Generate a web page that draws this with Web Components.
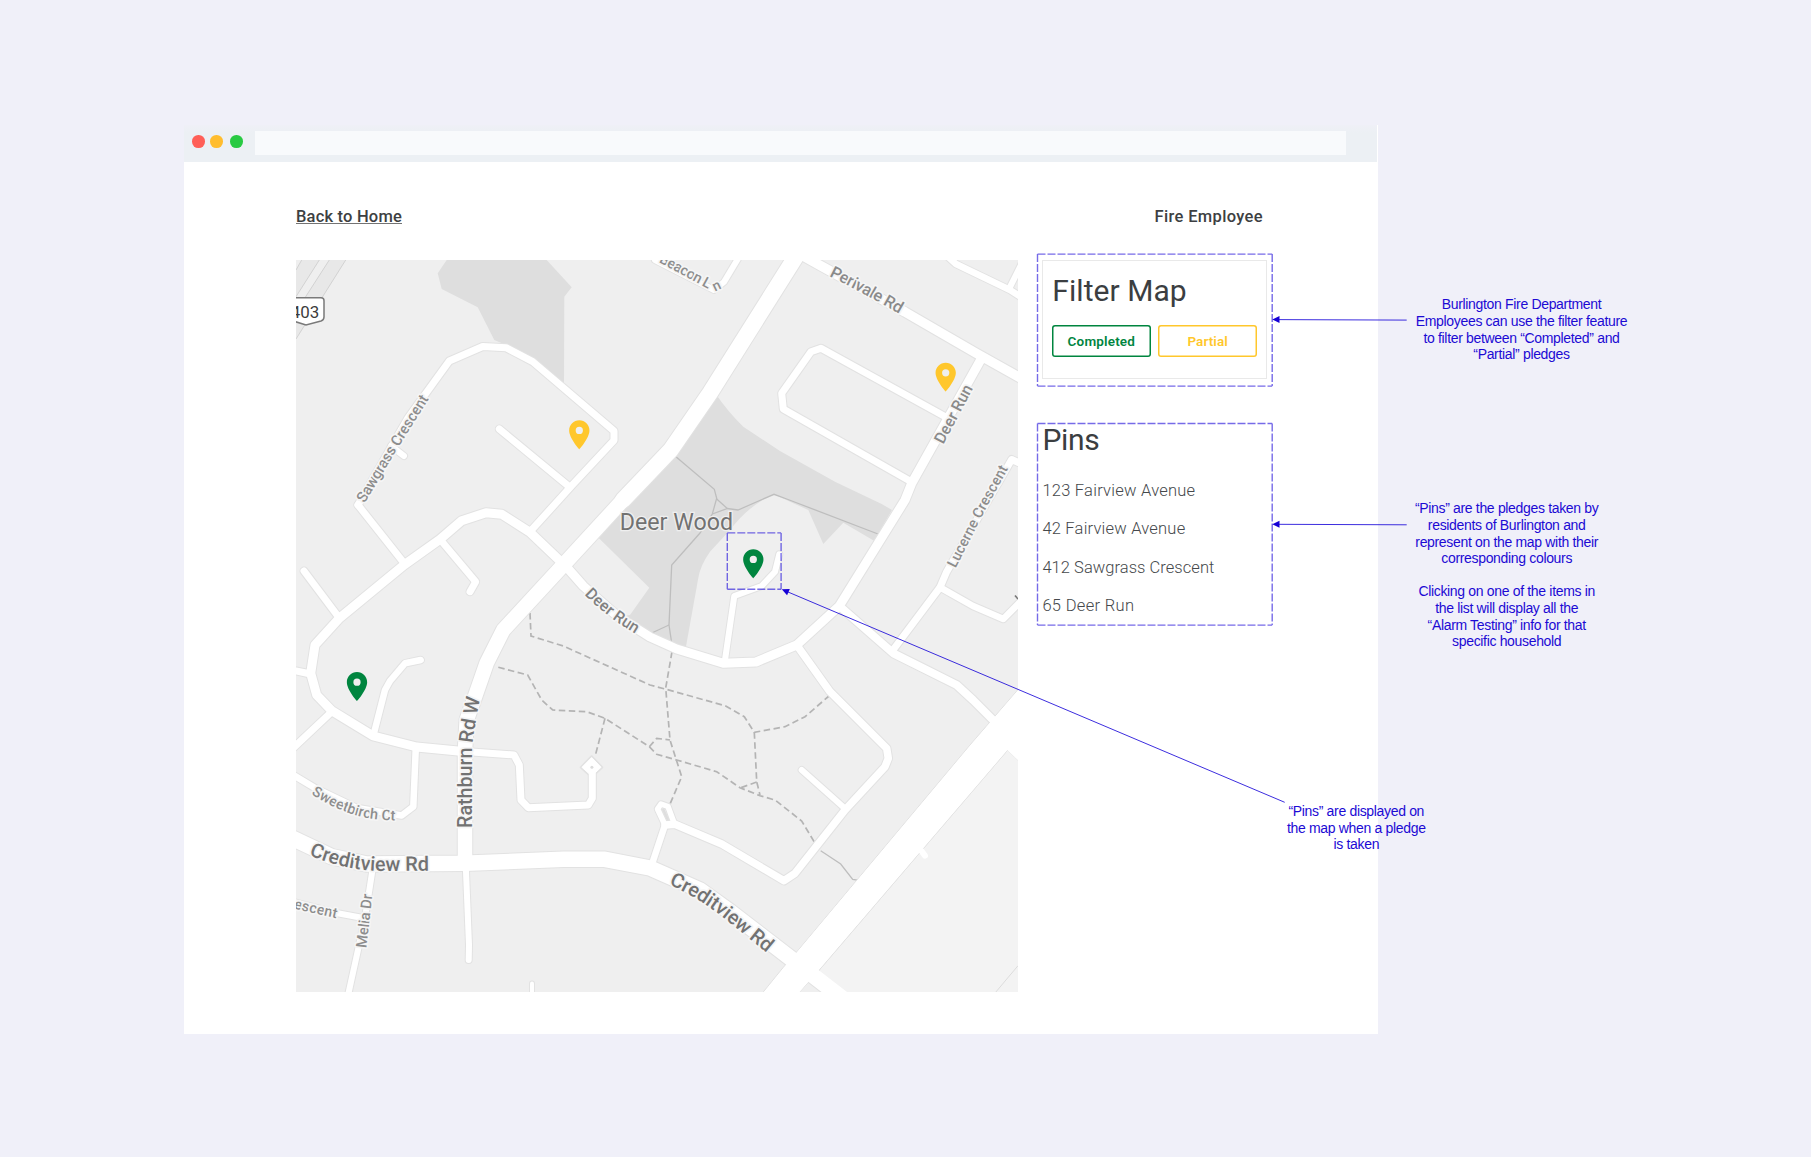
<!DOCTYPE html>
<html lang="en">
<head>
<meta charset="utf-8">
<title>Fire Employee – Map</title>
<style>
html,body{margin:0;background:#f0f0f9;overflow:hidden}
body{width:1811px;height:1157px;font-family:Roboto,"Liberation Sans",sans-serif}
</style>
</head>
<body>
<annotated-stage>
  <browser-window>
    <page-nav></page-nav>
    <div style="display:flex;gap:24.4px;align-items:flex-start">
      <street-map></street-map>
      <side-column></side-column>
    </div>
  </browser-window>
  <annotation-layer slot="notes"></annotation-layer>
</annotated-stage>
<script>
function define(name, html, ready) {
  const t = document.createElement('template');
  t.innerHTML = html;
  customElements.define(name, class extends HTMLElement {
    connectedCallback() {
      if (this.shadowRoot) return;
      this.attachShadow({mode: 'open'}).appendChild(t.content.cloneNode(true));
      if (ready) ready.call(this);
    }
  });
}

/* Text whose tracking is spread so the line fills a given width. */
define('fit-text', `<style>:host{display:inline-block;white-space:nowrap}</style><span><slot></slot></span>`, function () {
  const span = this.shadowRoot.querySelector('span');
  const w = +this.getAttribute('width'), n = this.textContent.length;
  span.style.letterSpacing = (w - span.getBoundingClientRect().width) / n + 'px';
});

define('annotated-stage', `<style>
:host{display:block;position:relative;box-sizing:border-box;width:1811px;height:1157px;padding:125px 0 0 184px}
</style><slot></slot><slot name="notes"></slot>`);

define('browser-window', `<style>
:host{display:flex;flex-direction:column;width:1194.3px;height:909px;background:#fff}
header{display:flex;align-items:center;height:37px;margin-right:1.3px;box-sizing:border-box;padding-left:8px;background:linear-gradient(#eff0f7,#ecf0f4 8px)}
i{width:12.6px;height:12.6px;border-radius:50%;margin-top:-3.6px}
i+i{margin-left:5.8px} i+i+i{margin-left:7.4px}
.address{width:1091px;height:24px;margin:-1px 0 0 12px;background:#f8fafc}
main{padding:42px 115.3px 0 112px}
</style>
<header><i style="background:#ff5f57"></i><i style="background:#ffbd2e"></i><i style="background:#28ca42"></i><div class="address"></div></header>
<main><slot></slot></main>`);

define('page-nav', `<style>
:host{display:flex;justify-content:space-between;font:500 16.5px/24px Roboto,sans-serif;color:#3d3f42;padding-top:1px;margin-bottom:31px}
a{color:inherit;text-decoration:none;height:18.4px;border-bottom:1.6px solid #737373}
</style><a><fit-text width="106">Back to Home</fit-text></a><fit-text width="108.5">Fire Employee</fit-text>`);

define('filter-button', `<style>
:host{display:flex;align-items:center;justify-content:center;box-sizing:border-box;width:99.3px;height:31.7px;border-radius:3px;box-shadow:inset 0 0 0 1.5px currentColor;font:600 13.5px/20px Roboto,sans-serif}
</style><slot></slot>`);

define('filter-card', `<style>
:host{display:block;box-sizing:border-box;width:224.2px;height:118.8px;border:1px solid #e9e9e9;padding:9.5px 8px 0 8.3px}
h2{margin:0 0 14.6px .6px;font:400 30px/40px Roboto,sans-serif;color:#3b3e41}
div{display:flex;gap:7px}
</style><h2><fit-text width="134.5">Filter Map</fit-text></h2>
<div><filter-button style="color:#00853f"><fit-text width="67.5">Completed</fit-text></filter-button>
<filter-button style="color:#ffc72c"><fit-text width="40.5">Partial</fit-text></filter-button></div>`);

define('pin-list', `<style>
:host{display:block;margin-top:41.7px}
h2{margin:0 0 11.8px;font:400 30px/40px Roboto,sans-serif;color:#3b3e41}
ul{list-style:none;margin:0;padding:0;font:300 16.5px/38.2px Roboto,sans-serif;color:#45484b}
li{height:38.2px}
</style><h2><fit-text width="57">Pins</fit-text></h2>
<ul><li><fit-text width="153">123 Fairview Avenue</fit-text></li>
<li><fit-text width="143">42 Fairview Avenue</fit-text></li>
<li><fit-text width="172">412 Sawgrass Crescent</fit-text></li>
<li><fit-text width="92">65 Deer Run</fit-text></li></ul>`);

define('side-column', `<style>:host{display:block;width:224px}</style><filter-card></filter-card><pin-list></pin-list>`);

/* [width, points] – casings are painted under all carriageways so junctions merge. */
const roads = [
 [7,'358,505 408,418 449.3,361 482.7,346.5 506,347.7 532.7,361.7 614,431 614,440.3 571.7,485.7 530,531.7'],
 [7,'358,505 404,563'],[7,'499.3,429 569.3,486.7'],[6,'391,446 404,456'],
 [9,'563.3,564 530,532.3 501.7,514.2 486,512.7 461.7,520.7 440,539.3 404,565 339.3,618.3 315,645 310.7,673.3 316.7,695 331.7,710.7 373.3,736 416.7,747 458,751'],
 [7,'458,751 514,755 519.3,765 521,800 528.3,807.7 588.3,805 592.3,798.3 592.3,773.3'],
 [7,'440,539.3 475.7,581.7 470,591.7'],[7,'304,571 338.3,616.7'],[7,'296,671 310.7,674'],[7,'290,751 331.7,711.7'],
 [6.5,'374,733 385,690 390,681 405,663.3 420.7,660'],
 [9,'563.3,563.3 583.3,586 618,616.7 650,637 676.7,649 723.3,663.3 756,662 796.7,645 839.3,606 905,500 911.7,483.3 981.7,358'],
 [9.5,'778,242 823,267 905,312 976.7,353.5 1024,380'],
 [16,'805,242 710,393 670.7,450 650,471.7 623,500'],
 [14.5,'623,500 563.3,565 503.3,630 486.7,663 475,696.7 466.7,720 465,750 465,863'],
 [15.5,'290,837 331.7,856.7 366.7,864 465,863.3 563.3,859.3 605,859.3 650,868 700,890 730,911.7 795,961.7 842,998'],
 [6,'466,871.7 469,945 468.7,960'],[6,'372.3,871 365,918 347,1000'],[6,'290,901 335,912.7 361.7,917.7'],
 [6.5,'290,773 315,788 356.7,808 401.7,815.5 413.3,806.7 415.7,750'],[4,'532,983.5 532,1000'],
 [8,'839.3,606 893.3,653.3 956.7,685 973,700 995,722'],
 [7,'893,650 940,587.3 946.7,571.7 1011.7,459.5 1024,465'],
 [6.5,'940,587.3 973,606 1003.3,619 1024,598'],
 [6.5,'946,255 956,264 1010,290 1024,299'],[6,'1009.3,288.3 1024,259'],
 [6,'742,252 724,282 714,290 655,260'],
 [7,'948,418.3 821,348.3 811,351.7 781.7,393.3 783.3,409 911.7,482'],
 [6,'725,660 734.3,596 761.7,586 775,571.7 779.3,554.3'],
 [7.5,'796.7,645 830,691.7 886.7,748.3 888.3,758.3 885,766.7 845,810 795,873.3 784,880.7 721.7,844 675,824.3 665,825'],
 [5.5,'665,825 657.5,809 661,804 668,806.5 674.5,824'],
 [6.5,'665,825 651.7,865'],[6,'801.7,770 843,806.7'],[6,'920,849 925,855.7']
];
const solid = ['673,454.3 714.3,489.3 716.7,498.3 712.3,514 700,533 671.7,565 669,625 672,645','716.7,499 727.3,508.5 712.3,514','727.3,508.5 738,510 774,494.3 786.7,499 878,534','669,625 651.7,633','820.7,850.7 840.7,864 852.7,879.3 860.7,880.7'];
const dashed = ['672,651.7 665.7,688 670,740 681.7,776.7 670,804',
 '530,613 531,636 563.3,646 650,685 665,689 725,705.7 744.3,716.7 754.3,732.3 785,726.7 805,716.7 829,696',
 '754.3,732.3 756.7,781.7 760,795','756.7,782 740,788',
 '498.3,667.3 527.7,675 541.7,700 552.7,710 586.7,711.7 605,718.3 649.3,746.7 656.7,754.3 676.7,760 716.7,771.7 740,787.7 760,795.7 775,800 801.7,821 815.7,844.3',
 '605,718.3 595,756.7','649.3,746.7 656.7,738.3 670,740'];
/* [text, baseline, size, length, weight, colour] */
const labels = [
 ['Sawgrass Crescent','M364.5,503.5 L395.5,452 L431.5,394.5',15,123,500,'#8d8d8d'],
 ['Beacon L','M658.5,262 L714,292',14.5,56.5,500,'#8d8d8d'],
 ['n','M715,291.6 L724,287.2',14,0,500,'#8d8d8d'],
 ['Perivale Rd','M829,276 Q866,294.5 904,316.5',16.5,80,500,'#8a8a8a'],
 ['Deer Run','M943.3,444.8 L975.5,384',16,64,500,'#8a8a8a'],
 ['Lucerne Crescent','M955.5,568.5 L984.3,511.5 L1010.8,464',14.5,113,500,'#8d8d8d'],
 ['Deer Run','M584.5,594.5 Q606,617 643,638.5',16,64.5,500,'#808080'],
 ['Rathburn Rd W','M472.3,828 L472.3,750 Q472.5,735 481.5,692',19.8,131,500,'#727272'],
 ['Creditview Rd','M308.8,855 Q343,870 380,871 L440,870.5',20,122.5,500,'#727272'],
 ['Creditview Rd','M668.7,884.5 Q700,898 730,923 L777,961',20,120,500,'#727272'],
 ['Sweetbirch Ct','M311,794 Q338,811.8 366.7,818 Q382,820.3 404,821',14.5,90,500,'#8d8d8d'],
 ['Melia Dr','M366.3,948.3 L373,890',14.8,54,500,'#8d8d8d'],
 ['rescent','M288.5,907.5 L342,919.5',14.5,49,500,'#8d8d8d']
];
const pin = (x, y, c) => `<g transform="translate(${x} ${y}) scale(1.45) translate(-12 -22)"><path fill="${c}" fill-rule="evenodd" d="M12 2C8.13 2 5 5.13 5 9c0 5.25 7 13 7 13s7-7.75 7-13c0-3.87-3.13-7-7-7zm0 9.5a2.5 2.5 0 0 1 0-5 2.5 2.5 0 0 1 0 5z"/></g>`;
const poly = (extra, p) => `<polyline points="${p}" ${extra}/>`;
define('street-map', `<style>:host{display:block;width:722px;height:732px}svg{display:block}text{font-family:Roboto,sans-serif}</style>
<svg width="722" height="732" viewBox="296 260 722 732">
<rect x="296" y="260" width="722" height="732" fill="#efefef"/>
<path fill="#e8e8e8" d="M301.7 260H319.3L296 296.7V270zM329.3 260H345.7L296 339V311.7z"/>
<path fill="none" stroke="#d2d2d2" d="M301.7 260L296 270M319.3 260L296 296.7M329.3 260L296 311.7M345.7 260L296 339"/>
<path fill="#dedede" d="M446.7 260L437.7 273.3 441.7 289 477.7 307.3 494.3 340 506 345 535 361 564 384 564.3 296.7 571.7 287.3 546.7 260z"/>
<path fill="#dedede" d="M716 394.3Q728 412 743.3 426.7L780 451 835 481.7 881.7 504 892 510 874 540.7 843.3 522.7 823.3 544 808.3 510 790 501.7 774 494.3Q750 504 730 530L710 551.7Q700 566 698.3 578L685 652 650 637 618 617 630 615 649.3 587.7 599 538.3 620 500 671 450z"/>
<g fill="none" stroke="#bebebe" stroke-width="1.3">${solid.map(p => poly('', p)).join('')}</g>
<g fill="none" stroke="#b4b4b4" stroke-width="1.7" stroke-dasharray="6.5 3.5">${dashed.map(p => poly('', p)).join('')}</g>
<g fill="none" stroke="#e2e2e2" stroke-linejoin="round" stroke-linecap="round">${roads.map(r => poly(`stroke-width="${r[0] + 2}"`, r[1])).join('')}</g>
<path d="M591.7 756.5L602 767.3 591.7 777 581 767.3z" fill="#fff" stroke="#e2e2e2" stroke-width="2.5" stroke-linejoin="round"/>
<path d="M1007.7 750L816.7 973 840 995H1022V764z" fill="#f3f3f3" stroke="#e2e2e2"/>
<path d="M1022 685L970 745 795 954 783 967.7 760 996 796 996 816.7 973 1007.7 750 1022 764z" fill="#fff" stroke="#e2e2e2"/>
<g fill="none" stroke="#fff" stroke-linejoin="round" stroke-linecap="round">${roads.map(r => poly(`stroke-width="${r[0]}"`, r[1])).join('')}</g>
<path d="M1022 686L970.5 745.5 784 967.7 761 996 796 996 816.5 972.5 1007.3 750 1022 764z" fill="#fff"/>
<path d="M591.7 757.5L601 767.3 591.7 776 582 767.3z" fill="#fff" stroke="#fff" stroke-linejoin="round"/><circle cx="591.9" cy="767.3" r="1.5" fill="#dcdcdc"/>
<path d="M663 809L668 820" stroke="#dedede" stroke-width="2.6"/>
<path d="M1018 965.7L995 993" stroke="#dcdcdc"/>
<path d="M1015 595.5L1018 599" stroke="#777" stroke-width="1.6"/>
<path d="M290 297.7H321Q324 297.7 324 300.7V317Q324 320 321 321L306 325 290 320z" fill="#fff" stroke="#7a7a7a" stroke-width="1.5"/>
<text x="290.8" y="317.7" font-size="16.9" fill="#3c3c3c">403</text>
${labels.map((l, i) => `<path id="b${i}" d="${l[1]}" fill="none"/><text font-size="${l[2]}" font-weight="${l[4]}" fill="${l[5]}" stroke="#f5f5f5" stroke-width="3.4" stroke-linejoin="round" paint-order="stroke"${l[3] ? ` textLength="${l[3]}"` : ''}><textPath href="#b${i}"${l[3] ? ` textLength="${l[3]}"` : ''}>${l[0]}</textPath></text>`).join('')}
<text x="619.8" y="530" font-size="23.2" textLength="113.2" fill="#727272" stroke="#efefef" stroke-width="2.6" paint-order="stroke">Deer Wood</text>
${pin(579.3, 449.3, '#ffc72c')}${pin(945.7, 391.7, '#ffc72c')}${pin(357, 701, '#00853f')}${pin(753.3, 578.3, '#00853f')}
</svg>`);

define('note-text', `<style>
:host{position:absolute;display:block;width:260px;text-align:center;font:14px/16.6px "Liberation Sans",Arial,sans-serif;letter-spacing:-.33px;color:#1c0ad4;white-space:pre-line}
</style><slot></slot>`);

const box = (x, y, w, h) => `<path d="M${x} ${y}h${w}M${x} ${y + h}h${w}M${x} ${y}v${h}M${x + w} ${y}v${h}"/>`;
define('annotation-layer', `<style>:host{position:absolute;inset:0;pointer-events:none}svg{position:absolute;inset:0}</style>
<svg width="1811" height="1157">
<g fill="none" stroke="#1a08d8" stroke-opacity=".6" stroke-width="1.4" stroke-dasharray="8 2">${box(1037.5, 254.1, 234.7, 132)}${box(1037.5, 423.5, 234.7, 201.6)}${box(727.3, 532.9, 53.8, 56.4)}</g>
<g stroke="#1a08d8" stroke-opacity=".85" stroke-width="1"><path d="M1276 319.6L1406.7 320.1M1276 524.3L1406.7 524.8M784 590.3L1284.7 802.3"/></g>
<g fill="#1600d6"><path d="M1272.3 319.5l7.2-3.5v7zM1272.3 524.3l7.2-3.5v7z"/><path d="M0 0l7.2-3.5v7z" transform="translate(781.8 589.3) rotate(23)"/></g>
</svg>
<note-text style="left:1391.5px;top:296.4px">Burlington Fire Department
Employees can use the filter feature
to filter between “Completed” and
“Partial” pledges</note-text>
<note-text style="left:1376.7px;top:500.4px">“Pins” are the pledges taken by
residents of Burlington and
represent on the map with their
corresponding colours

Clicking on one of the items in
the list will display all the
“Alarm Testing” info for that
specific household</note-text>
<note-text style="left:1226.3px;top:803.2px">“Pins” are displayed on
the map when a pledge
is taken</note-text>`);
</script>
</body>
</html>
